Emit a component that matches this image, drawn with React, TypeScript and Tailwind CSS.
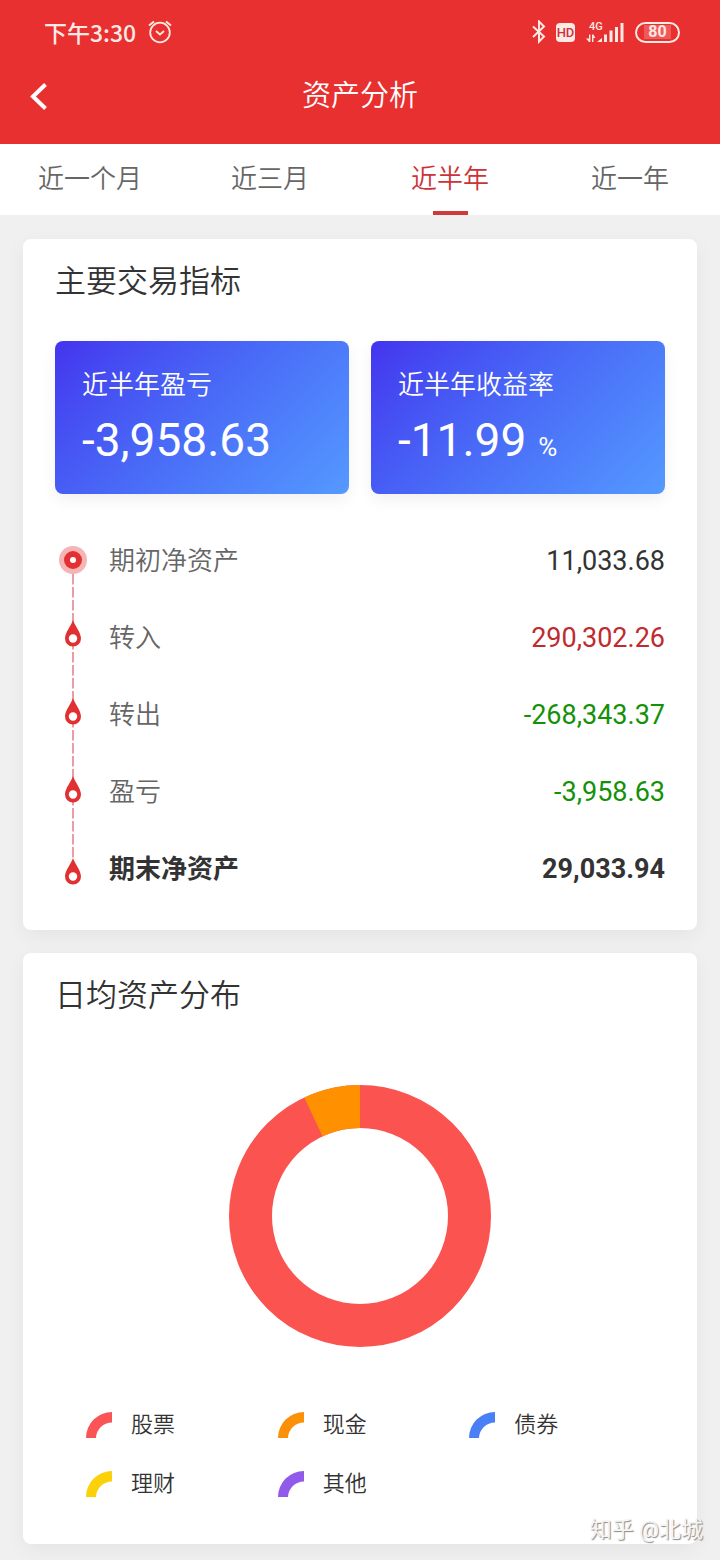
const tabs = ['近一个月', '近三月', '近半年', '近一年'];
const activeTab = '近半年';

const metrics = [
  { label: '近半年盈亏', value: '-3,958.63', unit: '' },
  { label: '近半年收益率', value: '-11.99', unit: '%' },
];

const flows = [
  { label: '期初净资产', value: '11,033.68', color: 'text-[#333333]' },
  { label: '转入', value: '290,302.26', color: 'text-[#c02b2f]' },
  { label: '转出', value: '-268,343.37', color: 'text-[#149108]' },
  { label: '盈亏', value: '-3,958.63', color: 'text-[#149108]' },
  { label: '期末净资产', value: '29,033.94', color: 'text-[#333333]', total: true },
];

const legend = [
  { label: '股票', color: '#fa5456' },
  { label: '现金', color: '#fb9109' },
  { label: '债券', color: '#4a80f5' },
  { label: '理财', color: '#fbd20a' },
  { label: '其他', color: '#925aea' },
];

// top of each drop marker along the timeline
const dropTops = [97, 175, 253, 335];

function StatusBar() {
  return (
    <div className="flex h-16 items-center justify-between pl-11 pr-10 text-[#ffe9e4]">
      <div className="flex items-center gap-3">
        <span className="font-['Noto_Sans_CJK_SC',sans-serif] text-[23px] font-medium leading-8">下午3:30</span>
        <svg width="24" height="24" viewBox="0 0 24 24" fill="none" stroke="currentColor" strokeWidth="1.8" aria-hidden="true">
          <circle cx="12" cy="12.5" r="9.8" />
          <path d="M8 11l4 3.5 4-3.5" />
          <path d="M1 5.5L6 1.5M23 5.5L18 1.5" strokeWidth="2" />
        </svg>
      </div>
      <div className="flex items-center">
        <svg width="14" height="24" viewBox="0 0 14 24" fill="none" stroke="currentColor" strokeWidth="2" aria-hidden="true">
          <path d="M1 6.5l11 10-5 5V1.500l5 5L1 17" />
        </svg>
        <span className="ml-[10px] flex h-[19px] w-[19px] items-center justify-center rounded bg-[#ffe9e4] font-[Roboto,sans-serif] text-[13px] font-medium leading-none text-[#c8323c]">
          HD
        </span>
        <div className="relative ml-[11px]">
          <span className="absolute left-[3px] top-0 font-[Roboto,sans-serif] text-[11px] font-medium leading-none">4G</span>
          <svg width="39" height="22" viewBox="0 0 39 22" fill="currentColor" aria-hidden="true">
            <path d="M3 13.500h1.400V21H3l-3-3.400h3zM6 21v-7.500h1.400l2 3.400H7.400V21z" />
            <path d="M11 21l5-4v4zM18 13.500h3V21H18zM23.500 9.500h3V21h-3zM29 6h3v15h-3zM34.500 2h3v19h-3z" />
          </svg>
        </div>
        <div className="ml-[10px] flex h-[21px] w-[45px] items-center justify-center rounded-full border-2 border-current">
          <span className="bg-[#ee5a5a] px-1 font-[Roboto,sans-serif] text-[16px] font-bold leading-[14px]">80</span>
        </div>
      </div>
    </div>
  );
}

function Timeline() {
  return (
    <svg className="ml-1 shrink-0" width="28" height="385" viewBox="0 0 28 385" aria-hidden="true">
      <path d="M14 51V335" stroke="#eb9da3" strokeWidth="2" strokeDasharray="10.5 2.500" />
      <circle cx="14" cy="37" r="14" fill="#f6b4b6" />
      <circle cx="14" cy="37" r="9" fill="#e33133" />
      <circle cx="14" cy="37" r="3" fill="#fff" />
      {dropTops.map((top) => (
        <g key={top} transform={`translate(6 ${top})`}>
          <path d="M8 0C9.500 5 16 12.500 16 18.500A8 8 0 0 1 0 18.500C0 12.500 6.500 5 8 0Z" fill="#e03032" />
          <circle cx="8" cy="18.500" r="4.200" fill="#fff" />
        </g>
      ))}
    </svg>
  );
}

function Donut() {
  return (
    <svg className="mx-auto mt-[67px] block" width="262" height="262" viewBox="0 0 262 262" role="img" aria-label="日均资产分布">
      <g fill="none" strokeWidth="43" transform="rotate(-90 131 131)">
        <circle cx="131" cy="131" r="109.500" stroke="#fb5450" />
        <circle cx="131" cy="131" r="109.500" stroke="#ff9100" pathLength="100" strokeDasharray="7 93" strokeDashoffset="-93" />
      </g>
    </svg>
  );
}

function Card({ title, className, children }: { title: string; className: string; children: React.ReactNode }) {
  return (
    <section className={`mx-[23px] rounded-lg bg-white px-8 pt-[21px] shadow-[0_6px_20px_rgba(0,0,0,0.05)] ${className}`}>
      <h2 className="text-[31px] font-[350] leading-[44px] text-[#333333]">{title}</h2>
      {children}
    </section>
  );
}

export default function App() {
  return (
    <div className="relative min-h-screen bg-[#f0f0f0] pb-4 font-[Roboto,'Noto_Sans_CJK_SC',sans-serif] font-normal">
      <header className="bg-[#e83030]">
        <StatusBar />
        <div className="grid h-20 grid-cols-[1fr_auto_1fr] items-start px-7 text-white">
          <button type="button" aria-label="返回" className="w-fit pt-[18px]">
            <svg width="22" height="28" viewBox="0 0 22 28" fill="none" stroke="currentColor" strokeWidth="4">
              <path d="M17.500 2.500L5 14.500l12.500 12" />
            </svg>
          </button>
          <h1 className="pt-[10px] text-[29px] font-[350] leading-[44px]">资产分析</h1>
        </div>
      </header>

      <nav className="grid h-[71px] grid-cols-4 bg-white">
        {tabs.map((tab) => (
          <button
            key={tab}
            type="button"
            aria-current={tab === activeTab ? 'page' : undefined}
            className={`flex flex-col items-center justify-between pt-[17px] text-[26px] font-[350] leading-9 ${
              tab === activeTab ? 'text-[#cc3338]' : 'text-[#666666]'
            }`}
          >
            {tab}
            {tab === activeTab && <span className="h-1 w-[35px] bg-[#cc3a3a]" />}
          </button>
        ))}
      </nav>

      <main className="flex flex-col gap-[23px] pt-6">
        <Card title="主要交易指标" className="pb-[22px]">
          <div className="mt-[37px] grid grid-cols-2 gap-[22px]">
            {metrics.map((metric) => (
              <div
                key={metric.label}
                className="rounded-lg bg-linear-135 from-[#4433ee] to-[#5599ff] px-[27px] pb-[27px] pt-[26px] text-white shadow-[0_6px_16px_rgba(0,0,0,0.06)]"
              >
                <p className="text-[26px] font-[350] leading-9">{metric.label}</p>
                <p className="mt-[10px] text-[46px] leading-[54px]">
                  {metric.value}
                  {metric.unit && <span className="ml-3 text-[26px] leading-none">{metric.unit}</span>}
                </p>
              </div>
            ))}
          </div>

          <div className="mt-[29px] flex gap-[22px]">
            <Timeline />
            <dl className="flex-1">
              {flows.map((flow) => (
                <div key={flow.label} className="flex h-[77px] items-center justify-between">
                  <dt className={`text-[26px] ${flow.total ? 'font-bold text-[#333333]' : 'font-[350] text-[#666666]'}`}>
                    {flow.label}
                  </dt>
                  <dd className={`text-[27px] ${flow.color} ${flow.total ? 'font-bold' : ''}`}>{flow.value}</dd>
                </div>
              ))}
            </dl>
          </div>
        </Card>

        <Card title="日均资产分布" className="pb-[31px]">
          <Donut />
          <ul className="mt-12 grid grid-cols-3 pl-[31px] pr-1">
            {legend.map((item) => (
              <li key={item.label} className="flex h-[59px] items-center gap-[19px] text-[22px] font-[350] text-[#333333]">
                <svg width="26" height="26" viewBox="0 0 26 26" aria-hidden="true">
                  <path d="M0 26A26 26 0 0 1 26 0V10.500A16 16 0 0 0 10 26Z" fill={item.color} />
                </svg>
                {item.label}
              </li>
            ))}
          </ul>
        </Card>
      </main>

      <p className="absolute bottom-[14px] right-[17px] text-[22px] leading-8 text-[#f4f4f4] [text-shadow:1px_1px_1px_#888888]">
        知乎 @北城
      </p>
    </div>
  );
}
